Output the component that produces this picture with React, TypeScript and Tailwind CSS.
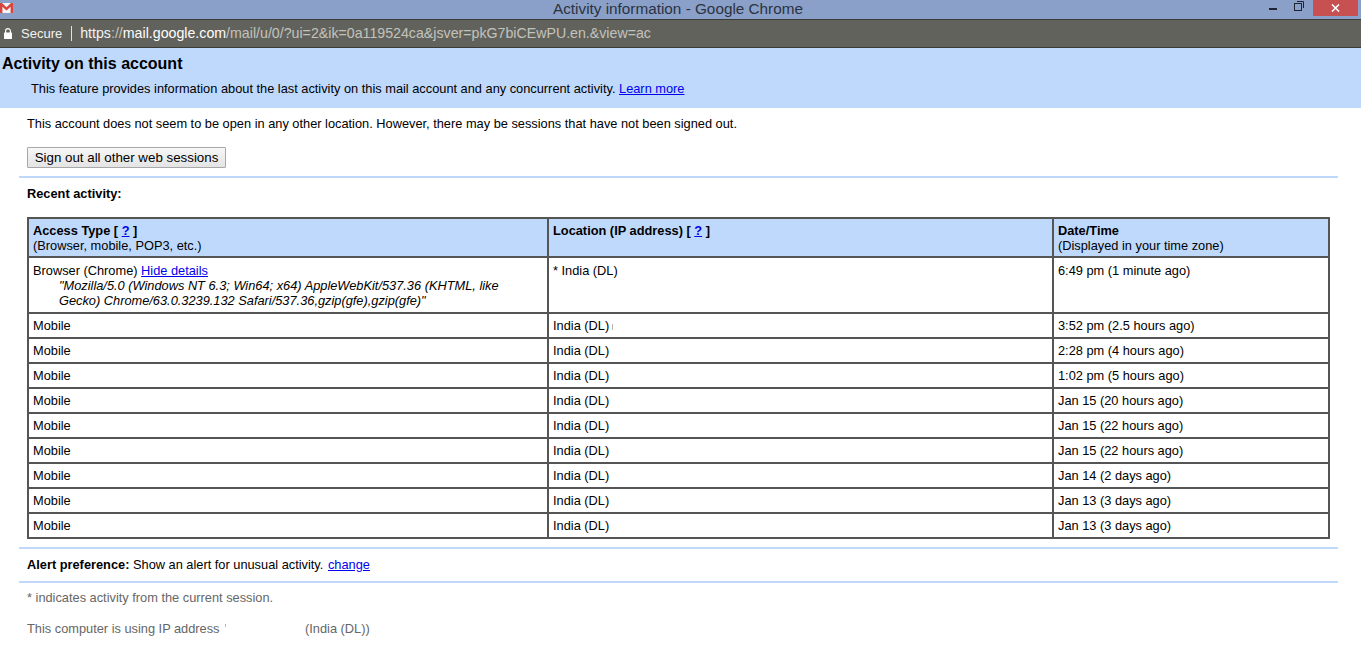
const rows: [string, string][] = [
  ["India (DL)", "3:52 pm (2.5 hours ago)"],
  ["India (DL)", "2:28 pm (4 hours ago)"],
  ["India (DL)", "1:02 pm (5 hours ago)"],
  ["India (DL)", "Jan 15 (20 hours ago)"],
  ["India (DL)", "Jan 15 (22 hours ago)"],
  ["India (DL)", "Jan 15 (22 hours ago)"],
  ["India (DL)", "Jan 14 (2 days ago)"],
  ["India (DL)", "Jan 13 (3 days ago)"],
  ["India (DL)", "Jan 13 (3 days ago)"],
];

const Link = ({ children }: { children: React.ReactNode }) => (
  <a href="#" className="text-[#0000ee] underline">{children}</a>
);

const headCell = "border-2 border-[#555555] px-[4px] pt-[4px] align-top font-normal";
const cell = "border-2 border-[#555555] px-[4px] pt-[5px] align-top";
const rowCell = "border-2 border-[#555555] px-[4px] align-middle";

export default function App() {
  return (
    <div className="h-[669px] w-[1361px] overflow-hidden bg-white font-['Liberation_Sans',Arial,sans-serif] text-[12.8px] leading-[15px] text-black">
      {/* Window title bar */}
      <div className="relative flex h-[19px] items-start justify-center bg-[#8aa0c8] pr-[5px]">
        <svg className="absolute left-0 top-[3px]" width="13" height="10" viewBox="0 0 13 10">
          <rect x="0" y="0" width="13" height="10" fill="#f4f4f4" />
          <path d="M0 0h2l4.5 4.2L11 0h2v10h-2.4V3.8L6.5 7.4 2.4 3.8V10H0z" fill="#d8453c" />
        </svg>
        <span className="text-[15.3px] leading-[18px] text-[#2b3342]">Activity information - Google Chrome</span>
        <div className="absolute right-[3px] top-0 flex items-start">
          <div className="mr-[17px] mt-[8px] h-[2px] w-[8px] bg-[#1f2530]" />
          <svg className="mr-[8px] mt-0" width="11" height="11" viewBox="0 0 11 11" fill="none" stroke="#1f2530">
            <rect x="0.5" y="3.5" width="7" height="7" strokeWidth="1" />
            <path d="M3 1.5h6.5V8" strokeWidth="1" />
          </svg>
          <div className="flex h-[16px] w-[45px] items-center justify-center bg-[#c75050]">
            <svg width="9" height="8" viewBox="0 0 9 8" stroke="#ffffff" strokeWidth="1.6" fill="none">
              <path d="M1 0.5l7 7M8 0.5l-7 7" />
            </svg>
          </div>
        </div>
      </div>

      {/* Address bar */}
      <div className="flex h-[29px] items-center border-y border-y-[#3a3a38] bg-[#62625c] text-[13px]">
        <svg className="ml-[4px]" width="8" height="11" viewBox="0 0 8 11">
          <path d="M1.6 5V3a2.4 2.4 0 0 1 4.8 0V5" fill="none" stroke="#ffffff" strokeWidth="1.2" />
          <rect x="0" y="4.5" width="8" height="6.5" rx="0.5" fill="#ffffff" />
        </svg>
        <span className="ml-[9px] text-[#f2f2f2]">Secure</span>
        <div className="ml-[9px] h-[15px] w-px bg-[#e0e0e0]" />
        <span className="ml-[8px] text-[14.2px] text-[#c2c2bd]">
          <span className="text-[#f2f2f2]">https</span>://<span className="text-white">mail.google.com</span>
          /mail/u/0/?ui=2&amp;ik=0a119524ca&amp;jsver=pkG7biCEwPU.en.&amp;view=ac
        </span>
      </div>

      {/* Header */}
      <div className="h-[60px] bg-[#bfd9fd] pl-[2px] pt-[7px]">
        <h1 className="text-[16px] font-bold leading-[18px]">Activity on this account</h1>
        <p className="ml-[29px] mt-[8px]">
          This feature provides information about the last activity on this mail account and any concurrent activity.{" "}
          <Link>Learn more</Link>
        </p>
      </div>

      {/* Body */}
      <div className="ml-[19px] mr-[23px]">
        <p className="ml-[8px] pt-[8px]">
          This account does not seem to be open in any other location. However, there may be sessions that have not been signed out.
        </p>
        <button className="ml-[8px] mt-[16px] block h-[21px] w-[199px] rounded-[1px] border border-[#a8a8a8] bg-gradient-to-b from-[#f6f6f6] to-[#e4e4e4] text-center text-[13.33px]">
          Sign out all other web sessions
        </button>
        <div className="mt-[8px] h-[2px] bg-[#bfd9fd]" />
        <p className="ml-[8px] mt-[8px] font-bold">Recent activity:</p>

        <table className="ml-[8px] mt-[16px] w-[1301px] table-fixed border-collapse">
          <colgroup>
            <col className="w-[520px]" />
            <col className="w-[505px]" />
            <col className="w-[276px]" />
          </colgroup>
          <thead>
            <tr className="h-[39px] bg-[#bfd9fd] text-left">
              <th className={headCell}>
                <b>Access Type [ <Link>?</Link> ]</b>
                <br />
                (Browser, mobile, POP3, etc.)
              </th>
              <th className={headCell}>
                <b>Location (IP address) [ <Link>?</Link> ]</b>
              </th>
              <th className={headCell}>
                <b>Date/Time</b>
                <br />
                (Displayed in your time zone)
              </th>
            </tr>
          </thead>
          <tbody>
            <tr className="h-[56px]">
              <td className={cell}>
                Browser (Chrome) <Link>Hide details</Link>
                <div className="ml-[26px] italic">
                  "Mozilla/5.0 (Windows NT 6.3; Win64; x64) AppleWebKit/537.36 (KHTML, like
                  <br />
                  Gecko) Chrome/63.0.3239.132 Safari/537.36,gzip(gfe),gzip(gfe)"
                </div>
              </td>
              <td className={cell}>* India (DL)</td>
              <td className={cell}>6:49 pm (1 minute ago)</td>
            </tr>
            {rows.map(([loc, time], i) => (
              <tr key={i} className="h-[25px]">
                <td className={rowCell}>Mobile</td>
                <td className={rowCell}>
                  {loc}
                  {i === 0 && <span className="ml-[3px] inline-block h-[6px] w-px bg-[#b5b5b5]" />}
                </td>
                <td className={rowCell}>{time}</td>
              </tr>
            ))}
          </tbody>
        </table>

        <div className="mt-[8px] h-[2px] bg-[#bfd9fd]" />
        <p className="ml-[8px] mt-[8px]">
          <b>Alert preference:</b> Show an alert for unusual activity. <span className="ml-[1px]"><Link>change</Link></span>
        </p>
        <div className="mt-[9px] h-[2px] bg-[#bfd9fd]" />
        <p className="ml-[8px] mt-[7px] text-[#666666]">* indicates activity from the current session.</p>
        <p className="ml-[8px] mt-[16px] flex items-start text-[#666666]">
          <span className="flex w-[278px] items-start">
            This computer is using IP address
            <span className="ml-[5px] mt-[3px] h-[3px] w-px bg-[#b5b5b5]" />
          </span>
          <span>(India (DL))</span>
        </p>
      </div>
    </div>
  );
}
